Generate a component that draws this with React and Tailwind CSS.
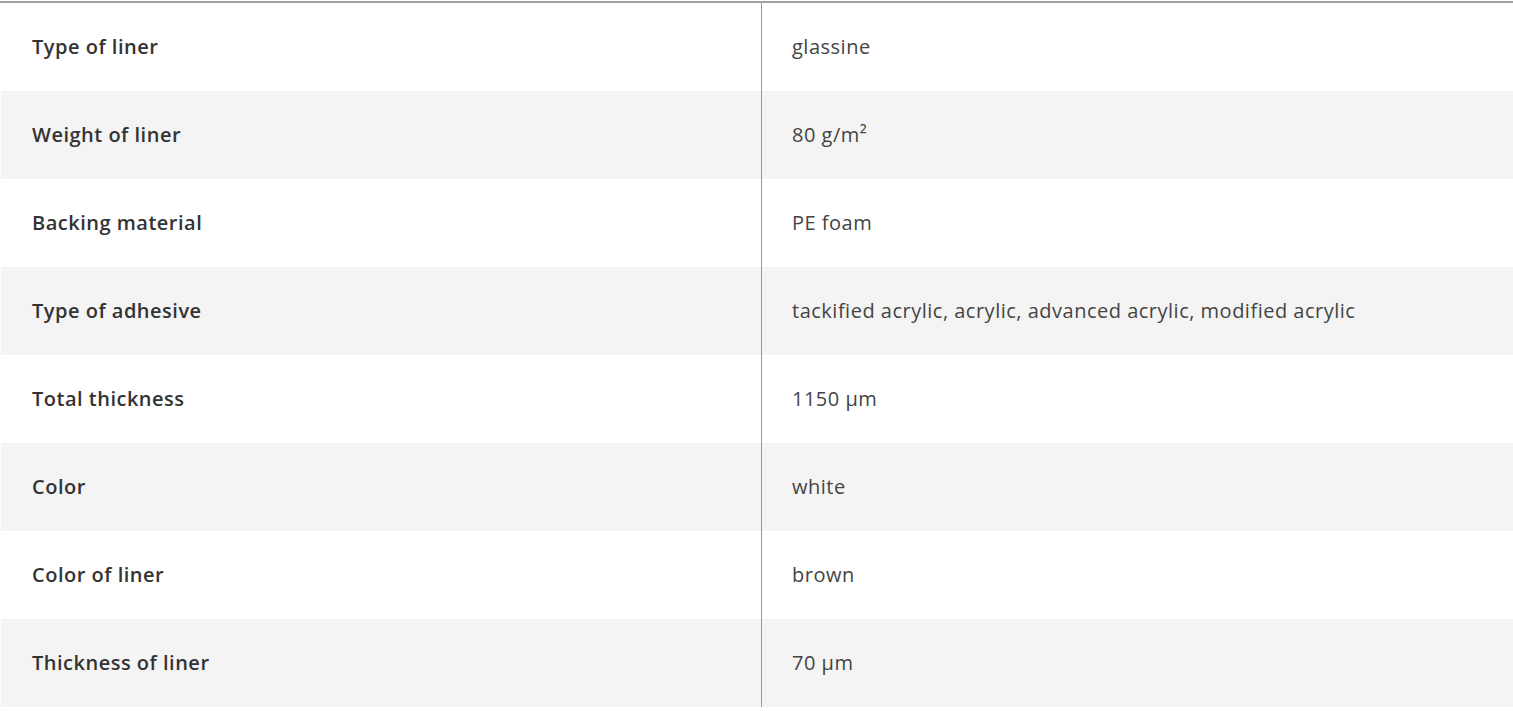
const rows = [
  ["Type of liner", "glassine"],
  ["Weight of liner", "80 g/m²"],
  ["Backing material", "PE foam"],
  ["Type of adhesive", "tackified acrylic, acrylic, advanced acrylic, modified acrylic"],
  ["Total thickness", "1150 µm"],
  ["Color", "white"],
  ["Color of liner", "brown"],
  ["Thickness of liner", "70 µm"],
];

export default function App() {
  return (
    <div className="w-full bg-white pt-px font-['Open_Sans',sans-serif] text-[20px] tracking-[0.5px]">
      <div className="border-t-2 border-[#a0a0a0]">
        {rows.map(([label, value], i) => (
          <div
            key={label}
            className={`ml-px flex h-[88px] items-center ${i % 2 ? "bg-[#f4f4f4]" : "bg-white"}`}
          >
            <div className="flex h-full w-[760px] items-center pl-[31px] font-semibold text-[#333]">
              {label}
            </div>
            <div className="flex h-full flex-1 items-center border-l border-[#999] pl-[30px] text-[#444]">
              <span>{value}</span>
            </div>
          </div>
        ))}
      </div>
    </div>
  );
}
